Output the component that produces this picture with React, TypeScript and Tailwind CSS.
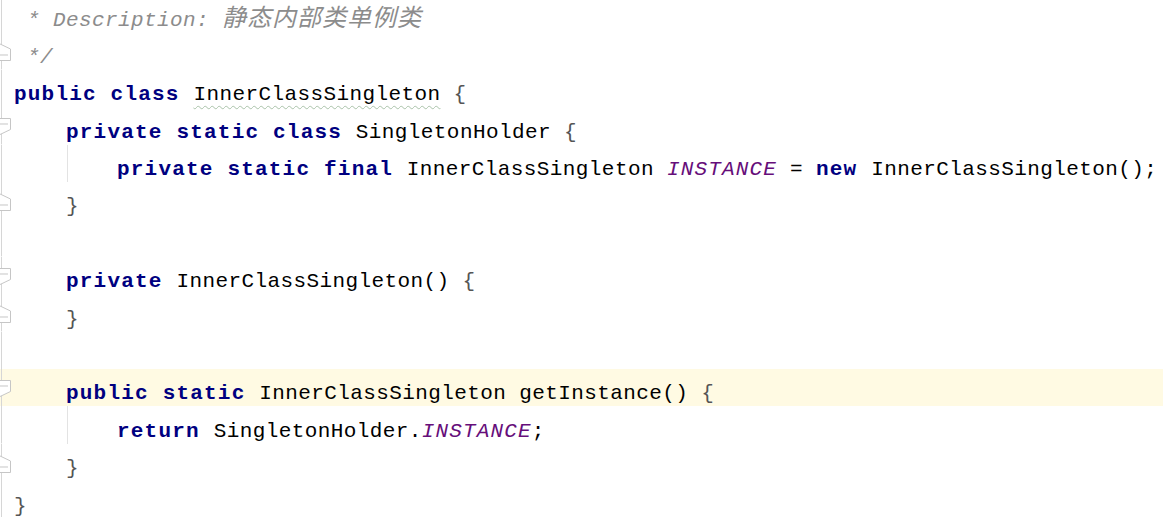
import React from "react";

type Tok = [string, string];
type Line = {
  fold?: "start" | "end";
  guide?: boolean;
  hl?: boolean;
  toks: Tok[];
};

const C: Record<string, string> = {
  kw: "font-bold text-[#000080] tracking-[1.2px]",
  pl: "text-black tracking-[0.4px]",
  ty: "text-black tracking-[0.4px] underline decoration-wavy decoration-[#a9c2a9] decoration-1 underline-offset-[5px]",
  fd: "italic text-[#660e7a] tracking-[1.15px]",
  cm: "italic text-[#8c8c8c] tracking-[0.4px]",
  zh: "italic text-[#8c8c8c] font-['Noto_Sans_CJK_SC',sans-serif] text-[24px] leading-[14px] tracking-[1px]",
  br: "text-[#555555] tracking-[0.4px]",
};

const lines: Line[] = [
  { toks: [["cm", " * Description: "], ["zh", "静态内部类单例类"]] },
  { fold: "end", toks: [["cm", " */"]] },
  { toks: [["kw", "public class "], ["ty", "InnerClassSingleton"], ["pl", " "], ["br", "{"]] },
  { fold: "start", toks: [["pl", "    "], ["kw", "private static class "], ["pl", "SingletonHolder "], ["br", "{"]] },
  {
    guide: true,
    toks: [
      ["kw", "private static final "],
      ["pl", "InnerClassSingleton "],
      ["fd", "INSTANCE"],
      ["pl", " = "],
      ["kw", "new "],
      ["pl", "InnerClassSingleton();"],
    ],
  },
  { fold: "end", toks: [["pl", "    "], ["br", "}"]] },
  { toks: [] },
  { fold: "start", toks: [["pl", "    "], ["kw", "private "], ["pl", "InnerClassSingleton() "], ["br", "{"]] },
  { fold: "end", toks: [["pl", "    "], ["br", "}"]] },
  { toks: [] },
  {
    fold: "start",
    hl: true,
    toks: [["pl", "    "], ["kw", "public static "], ["pl", "InnerClassSingleton getInstance() "], ["br", "{"]],
  },
  { guide: true, toks: [["kw", "return "], ["pl", "SingletonHolder."], ["fd", "INSTANCE"], ["pl", ";"]] },
  { fold: "end", toks: [["pl", "    "], ["br", "}"]] },
  { toks: [["br", "}"]] },
];

function Gutter({ fold }: { fold?: "start" | "end" }) {
  return (
    <div className="w-[12px] shrink-0">
      <svg width="12" height="37.4" viewBox="0 0 12 37.4" className="block">
        <line x1="1.5" y1="0" x2="1.5" y2="37.4" stroke="#d6d6d6" strokeWidth="1" />
        {fold === "start" && (
          <g stroke="#c6c6c6" strokeWidth="1" fill="#ffffff">
            <path d="M-2 11.5 H10.5 V22.5 L-2 28.5 Z" />
            <line x1="0" y1="17" x2="8" y2="17" />
          </g>
        )}
        {fold === "end" && (
          <g stroke="#c6c6c6" strokeWidth="1" fill="#ffffff">
            <path d="M-2 11 L10.5 17 V28.5 H-2 Z" />
            <line x1="0" y1="23" x2="8" y2="23" />
          </g>
        )}
      </svg>
    </div>
  );
}

function Toks({ toks }: { toks: Tok[] }) {
  return (
    <div className="pt-[13.5px] leading-[24px] whitespace-pre">
      {toks.map(([k, t], i) => (
        <span key={i} className={C[k]}>
          {t}
        </span>
      ))}
    </div>
  );
}

export default function App() {
  return (
    <div className="w-[1163px] h-[517px] overflow-hidden bg-white font-['Liberation_Mono','Noto_Sans_CJK_SC',monospace] text-[21px]">
      <div className="mt-[-5px] flex flex-col">
        {lines.map((l, i) => (
          <div key={i} className={`flex h-[37.4px] shrink-0 ${l.hl ? "bg-[#fffae3]" : ""}`}>
            <Gutter fold={l.fold} />
            <div className="flex-1 pl-[2px] flex">
              {l.guide ? (
                <>
                  <div className="w-[53px] shrink-0" />
                  <div className="flex border-l border-[#e3e3e3]">
                    <div className="w-[49px] shrink-0" />
                    <Toks toks={l.toks} />
                  </div>
                </>
              ) : (
                <Toks toks={l.toks} />
              )}
            </div>
          </div>
        ))}
      </div>
    </div>
  );
}
